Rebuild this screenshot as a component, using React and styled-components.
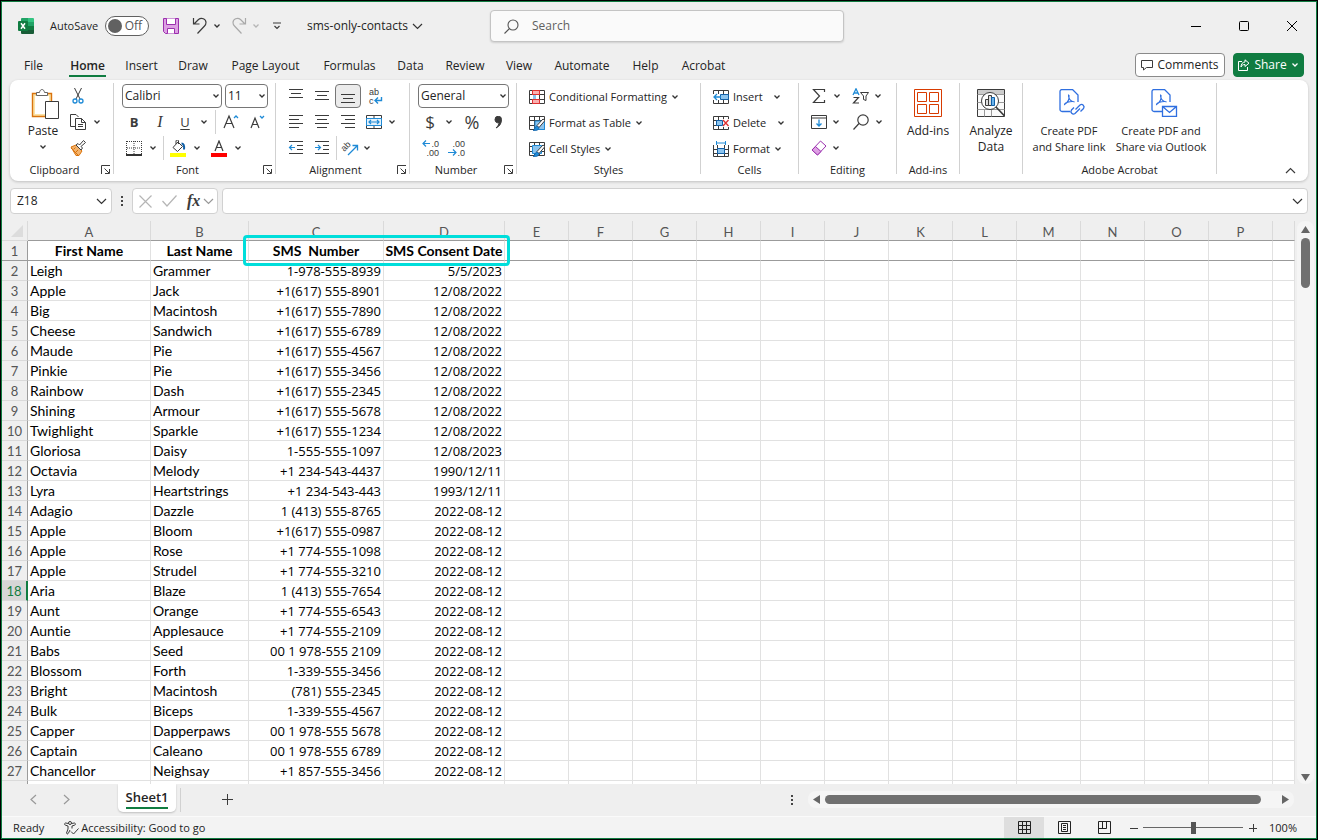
import React from "react";
import styled, { createGlobalStyle, css } from "styled-components";

const GREEN = "#107c41";
const INK = "#242424";
const BLUE = "#1e8ad6";

const GlobalStyle = createGlobalStyle`
  *, *::before, *::after { box-sizing: border-box; }
  body { margin: 0; background: #000; }
  button, input, select { font: inherit; color: inherit; }
`;

/* ---------- window frame ---------- */

const Window = styled.div`
  display: flex;
  flex-direction: column;
  height: 100vh;
  border: 1px solid #000;
  outline: 1px solid ${GREEN};
  outline-offset: -2px;
  padding: 1px;
  background: #efefef;
  color: ${INK};
  font: 12px/16px "Open Sans", "Noto Sans", sans-serif;
  overflow: hidden;
`;

const PlainButton = styled.button`
  display: flex;
  align-items: center;
  justify-content: center;
  padding: 0;
  border: 0;
  background: none;
  white-space: nowrap;
  cursor: default;
`;

const Drawing = styled.svg`
  display: block;
  flex: none;
  fill: none;
  stroke: ${(p) => p.$c || "#3b3b3b"};
  stroke-width: ${(p) => p.$sw || 1};
  text {
    stroke: none;
    fill: #3b3b3b;
    font: 9px "Liberation Sans", sans-serif;
  }
`;

const Icon = ({ w = 16, h = 16, c, sw, children }) => (
  <Drawing width={w} height={h} viewBox={`0 0 ${w} ${h}`} $c={c} $sw={sw} aria-hidden="true">
    {children}
  </Drawing>
);

const Chevron = ({ c = "#333" }) => (
  <Icon w={8} h={6} c={c} sw={1.3}><path d="M1.5 1.5 4 4l2.5-2.5" /></Icon>
);
const WideChevron = ({ c = "#333" }) => (
  <Icon w={11} h={7} c={c} sw={1.2}><path d="M1 1l4.500 4.500L10 1" /></Icon>
);
const Dots = () => (
  <Icon w={4} h={12}><path d="M1 1h2v2H1zM1 5h2v2H1zM1 9h2v2H1z" fill="#444" stroke="none" /></Icon>
);

/* ---------- title bar ---------- */

const TitleBar = styled.header`
  display: flex;
  align-items: center;
  flex: none;
  height: 48px;
`;
const QuickAccess = styled.div`
  display: flex;
  align-items: center;
  gap: 5px;
  flex: 0 0 488px;
  padding-left: 16px;
`;
const SplitButton = styled.div`
  display: flex;
`;
const AutoSave = styled.label`
  display: flex;
  align-items: center;
  gap: 7px;
  width: 115px;
  padding-left: 11px;
  font-size: 11px;
`;
const Toggle = styled.span`
  position: relative;
  display: flex;
  align-items: center;
  justify-content: flex-end;
  flex: none;
  width: 44px;
  height: 20px;
  padding-right: 6px;
  border: 1px solid #616161;
  border-radius: 10px;
  background: #fff;
  color: #555;
  font-size: 12px;
`;
const ToggleInput = styled.input`
  appearance: none;
  position: absolute;
  inset: 0;
  margin: 0;
  &::before {
    content: "";
    position: absolute;
    left: 2px;
    top: 2px;
    width: 14px;
    height: 14px;
    border-radius: 50%;
    background: #616161;
  }
`;
const QuickButton = styled(PlainButton)`
  width: ${(p) => p.$w}px;
  height: 24px;
`;
const DocumentTitle = styled(PlainButton)`
  gap: 4px;
  height: 24px;
  padding-left: 14px;
`;
const SearchBox = styled.label`
  display: flex;
  align-items: center;
  gap: 13px;
  flex: 0 1 354px;
  height: 32px;
  padding-left: 13px;
  border: 1px solid #c4c4c4;
  border-radius: 4px;
  background: #fafafa;
  box-shadow: 0 1px 2px #0002;
`;
const SearchInput = styled.input`
  flex: 1;
  min-width: 0;
  border: 0;
  padding: 0;
  outline: 0;
  background: none;
  font-size: 12px;
  &::placeholder { color: #616161; opacity: 1; }
`;
const WindowControls = styled.div`
  display: flex;
  margin-left: auto;
`;
const WindowButton = styled(PlainButton)`
  width: 48px;
  height: 48px;
`;

const ExcelLogo = () => (
  <Icon w={16} h={16}>
    <g stroke="none">
      <path d="M3 1a1 1 0 0 1 1-1h6v4H3z" fill="#21a366" />
      <path d="M10 0h5a1 1 0 0 1 1 1v3h-6z" fill="#33c481" />
      <path d="M3 4h7v4H3z" fill="#107c41" />
      <path d="M10 4h6v4h-6z" fill="#21a366" />
      <path d="M3 8h7v4H3z" fill="#185c37" />
      <path d="M10 8h6v4h-6z" fill="#107c41" />
      <path d="M3 12h13v3a1 1 0 0 1-1 1H4a1 1 0 0 1-1-1z" fill="#185c37" />
      <rect x="0" y="3" width="10" height="10" rx="1" fill="#107c41" />
    </g>
    <path d="M3 5.2l4 5.6M7 5.2l-4 5.6" stroke="#fff" strokeWidth="1.5" />
  </Icon>
);

const TopBar = () => (
  <TitleBar>
    <QuickAccess>
      <ExcelLogo />
      <AutoSave>
        AutoSave
        <Toggle><ToggleInput type="checkbox" role="switch" />Off</Toggle>
      </AutoSave>
      <QuickButton $w={24} aria-label="Save">
        <Icon c="#9b2fae">
          <path d="M.5 .5h15v15h-13l-2-2z" fill="#dda0e3" />
          <path d="M3.500 .5v6h9v-6M4.500 15.500v-5h7v5" fill="#fff" />
        </Icon>
      </QuickButton>
      <SplitButton>
        <QuickButton $w={24} aria-label="Undo">
          <Icon w={16} h={18} sw={1.2}><path d="M1.500 1v6h6M2 7l4.500-4.500c3-2.500 7.500-.5 7.500 3 0 1.500-.5 2.500-1.500 3.500l-7 7.500" /></Icon>
        </QuickButton>
        <QuickButton $w={10} aria-label="Undo history"><Chevron /></QuickButton>
      </SplitButton>
      <SplitButton>
        <QuickButton $w={24} aria-label="Redo">
          <Icon w={16} h={18} sw={1.2} c="#a9a9a9"><path d="M14.500 1v6h-6M14 7 9.500 2.500c-3-2.500-7.500-.5-7.500 3 0 1.500.5 2.500 1.500 3.500l7 7.500" /></Icon>
        </QuickButton>
        <QuickButton $w={10} aria-label="Redo history"><Chevron c="#b5b5b5" /></QuickButton>
      </SplitButton>
      <QuickButton $w={22} aria-label="Customize toolbar">
        <Icon w={8} h={8} sw={1.2}><path d="M0 1h8M1.500 4 4 6.500 6.500 4" /></Icon>
      </QuickButton>
      <DocumentTitle>sms-only-contacts<WideChevron /></DocumentTitle>
    </QuickAccess>
    <SearchBox>
      <Icon w={15} h={15} c="#555" sw={1.1}><circle cx="9" cy="6" r="5" /><path d="M5.500 9.500l-5 5" /></Icon>
      <SearchInput type="search" placeholder="Search" aria-label="Search" />
    </SearchBox>
    <WindowControls>
      <WindowButton aria-label="Minimize"><Icon w={10} h={10} c="#000"><path d="M0 5.500h10" /></Icon></WindowButton>
      <WindowButton aria-label="Maximize"><Icon w={10} h={10} c="#000"><rect x=".5" y=".5" width="9" height="9" rx="1" /></Icon></WindowButton>
      <WindowButton aria-label="Close"><Icon w={10} h={10} c="#000"><path d="M0 0l10 10M10 0 0 10" /></Icon></WindowButton>
    </WindowControls>
  </TitleBar>
);

/* ---------- ribbon tabs ---------- */

const TabBar = styled.nav`
  display: flex;
  align-items: center;
  flex: none;
  height: 30px;
  padding: 0 12px 0 6px;
`;
const TabButton = styled(PlainButton)`
  width: ${(p) => p.$w}px;
  height: 30px;
  font-size: 12px;
  font-weight: ${(p) => (p.$active ? 600 : 400)};
`;
const TabText = styled.span`
  display: block;
  padding: 0 1px;
  border-bottom: 2px solid ${(p) => (p.$active ? GREEN : "transparent")};
  margin-top: 4px;
  line-height: 18px;
`;
const TabActions = styled.div`
  display: flex;
  gap: 8px;
  margin-left: auto;
`;
const ActionButton = styled(PlainButton)`
  gap: 4px;
  width: ${(p) => p.$w}px;
  height: 24px;
  border: 1px solid ${(p) => (p.$primary ? GREEN : "#8a8a8a")};
  border-radius: 4px;
  background: ${(p) => (p.$primary ? GREEN : "#fff")};
  color: ${(p) => (p.$primary ? "#fff" : INK)};
  font-size: 12px;
`;

const TABS = [
  ["File", 51], ["Home", 57], ["Insert", 51], ["Draw", 52], ["Page Layout", 93], ["Formulas", 75],
  ["Data", 47], ["Review", 62], ["View", 46], ["Automate", 80], ["Help", 47], ["Acrobat", 69],
];

const Tabs = () => (
  <TabBar>
    {TABS.map(([name, w]) => (
      <TabButton key={name} $w={w} $active={name === "Home"}>
        <TabText $active={name === "Home"}>{name}</TabText>
      </TabButton>
    ))}
    <TabActions>
      <ActionButton $w={90}>
        <Icon w={12} h={12}><path d="M.5 1.500h11v7h-6l-3 2.500v-2.500h-2z" /></Icon>
        Comments
      </ActionButton>
      <ActionButton $w={71} $primary>
        <Icon w={12} h={12} c="#fff"><path d="M4 2.500H.5v9h9V8M7 .8l4 3.400-4 3.300V5.500c-2 0-3.300.8-4 2.500 0-3 1.500-4.800 4-5z" /></Icon>
        Share
        <Chevron c="#fff" />
      </ActionButton>
    </TabActions>
  </TabBar>
);

/* ---------- ribbon ---------- */

const Ribbon = styled.section`
  display: flex;
  flex: none;
  height: 101px;
  margin: 0 8px;
  padding: 3px 0 0;
  border-radius: 8px;
  background: #fff;
  box-shadow: 0 1px 3px #0003;
`;
const Group = styled.div`
  display: flex;
  flex-direction: column;
  flex: 0 0 ${(p) => p.$w}px;
  padding-left: ${(p) => p.$pad || 0}px;
  border-right: 1px solid #d1d1d1;
  height: 91px;
`;
const GroupFooter = styled.div`
  display: flex;
  align-items: center;
  gap: 4px;
  flex: none;
  height: 18px;
  margin-left: -${(p) => p.$pad || 0}px;
  padding: 0 2px;
  font-size: 11px;
`;
const GroupLabel = styled.span`
  flex: 1;
  text-align: center;
`;
const GroupBody = styled.div`
  display: flex;
  flex: none;
  height: 78px;
`;
const Rows = styled.div`
  display: flex;
  flex-direction: column;
`;
const ToolRow = styled.div`
  display: flex;
  align-items: center;
  gap: ${(p) => p.$gap || 0}px;
  height: 26px;
  padding-left: ${(p) => p.$pad || 0}px;
`;
const Tool = styled(PlainButton)`
  width: ${(p) => p.$w}px;
  height: 24px;
  ${(p) => p.$pressed && css`
    border: 1px solid #767676;
    border-radius: 4px;
    background: #ebebeb;
  `}
`;
const Divider = styled.i`
  width: ${(p) => p.$w}px;
  height: 24px;
  background: linear-gradient(#d1d1d1, #d1d1d1) center / 1px 100% no-repeat;
`;
const ToolGap = styled.span`
  width: 8px;
`;
const Letter = styled.span`
  font-size: ${(p) => p.$size || 14}px;
  font-weight: ${(p) => (p.$bold ? 700 : 400)};
  font-style: ${(p) => (p.$italic ? "italic" : "normal")};
  font-family: ${(p) => (p.$serif ? '"Liberation Serif", serif' : "inherit")};
  text-decoration: ${(p) => (p.$underline ? "underline" : "none")};
  text-underline-offset: 2px;
  color: #3b3b3b;
`;
const TextTool = styled(PlainButton)`
  justify-content: flex-start;
  gap: 4px;
  height: 24px;
  padding-top: 1px;
  font-size: 11px;
`;
const TextToolLabel = styled.span`
  min-width: ${(p) => p.$w || 0}px;
  text-align: left;
`;
const BigTool = styled(PlainButton)`
  flex-direction: column;
  justify-content: flex-start;
  width: ${(p) => p.$w}px;
  padding-top: 5px;
  font-size: ${(p) => (p.$small ? 11 : 12)}px;
  line-height: 16px;
`;
const BigIcon = styled.span`
  display: flex;
  align-items: flex-start;
  height: 35px;
  padding-top: 1px;
`;
const BigMore = styled.span`
  display: flex;
  align-items: center;
  height: 16px;
`;
const Picker = styled.span`
  position: relative;
  display: block;
  width: ${(p) => p.$w}px;
  height: 24px;
  svg { position: absolute; right: 2px; top: 9px; pointer-events: none; }
`;
const PickerSelect = styled.select`
  appearance: none;
  width: 100%;
  height: 24px;
  padding: 0 2px;
  border: 1px solid #767676;
  border-radius: 4px;
  background: #fff;
  font-size: 12px;
`;

const Select = ({ w, label, value }) => (
  <Picker $w={w}>
    <PickerSelect aria-label={label} defaultValue={value}><option>{value}</option></PickerSelect>
    <Chevron />
  </Picker>
);
const More = ({ w = 12, label = "More options" }) => (
  <Tool $w={w} aria-label={label}><Chevron /></Tool>
);
const Launcher = () => (
  <PlainButton aria-label="Open settings">
    <Icon w={10} h={10}><path d="M.5 9V.5H9M3.500 3.500l4.500 4.500M8.500 4v4.500H4" /></Icon>
  </PlainButton>
);

const RibbonGroup = ({ w, pad = 0, label, launcher, children }) => (
  <Group $w={w} $pad={pad}>
    <GroupBody>{children}</GroupBody>
    <GroupFooter $pad={pad}>
      <GroupLabel>{label}</GroupLabel>
      {launcher && <Launcher />}
    </GroupFooter>
  </Group>
);

const Lines = ({ rows }) => (
  <Icon><path d={rows.map(([x, y, len]) => `M${x} ${y}.5h${len}`).join("")} /></Icon>
);
const Indent = ({ out }) => (
  <Icon>
    <path d="M1 1.500h14M9 5.500h6M9 9.500h6M1 13.500h14" />
    <path d={out ? "M7 7.500H1.500M4 5 1.500 7.500 4 10" : "M1 7.500h5.500M4 5l2.500 2.500L4 10"} stroke={BLUE} strokeWidth="1.2" />
  </Icon>
);

const CellGrid = () => <path d="M.5 1.500h15v13H.5zM.5 5.500h15M.5 10.500h15M5.500 1.500v13M10.500 1.500v13" />;
const Brush = () => (
  <g>
    <path d="M8 10.500l6-6.500 2 1.500-6 7z" fill="#fff" />
    <path d="M4 15.500c2-.5 1.500-4 4-4.500l2 2c0 2-3 3-6 2.500z" fill={BLUE} stroke="#1160a8" strokeWidth=".7" />
  </g>
);

const Clipboard = () => (
  <RibbonGroup w={104} pad={8} label="Clipboard" launcher>
    <BigTool $w={50}>
      <BigIcon>
        <Icon w={32} h={32}>
          <g transform="translate(4 0)">
            <path d="M1.500 4.500h19v23h-19z" fill="#fbe2a5" stroke="#d9730d" strokeWidth="1.400" />
            <path d="M4 7h14v18H4z" fill="#fff" stroke="none" />
            <path d="M5.500 6.500v-3h3c.5-4 4.500-4 5 0h3v3z" fill="#fff" stroke="#666" />
            <path d="M14.500 12.500h13v17h-13z" fill="#fff" />
          </g>
        </Icon>
      </BigIcon>
      Paste
      <BigMore><Chevron /></BigMore>
    </BigTool>
    <Rows>
      <ToolRow>
        <Tool $w={20} aria-label="Cut">
          <Icon><path d="M4.500 0 10 11M11.500 0 6 11" /><circle cx="5" cy="13" r="2" stroke={BLUE} strokeWidth="1.3" /><circle cx="11" cy="13" r="2" stroke={BLUE} strokeWidth="1.3" /></Icon>
        </Tool>
      </ToolRow>
      <ToolRow>
        <Tool $w={20} aria-label="Copy">
          <Icon><path d="M5 12.500H.5V.5H6l2.500 2.500M5.500 4.500h6l4 4v7h-10zM11.500 4.500v4h4M8 10.500h5M8 12.500h5" /></Icon>
        </Tool>
        <More w={18} />
      </ToolRow>
      <ToolRow>
        <Tool $w={20} aria-label="Format Painter">
          <Icon><path d="M1 7l5-2 6 6-3 4.500H6z" fill="#f3b26b" stroke="#d9730d" /><path d="M1 8l7 7M3.500 9.500l2-2M6 12l2-2" stroke="#d9730d" /><path d="M6 5l2-1.500L9.500 5l4-4.500 2 2L11 6.500 12.500 8 11 10z" fill="#fff" /></Icon>
        </Tool>
      </ToolRow>
    </Rows>
  </RibbonGroup>
);

const FontGroup = () => (
  <RibbonGroup w={162} pad={7} label="Font" launcher>
    <Rows>
      <ToolRow $gap={3} $pad={1}>
        <Select w={100} label="Font" value="Calibri" />
        <Select w={43} label="Font size" value="11" />
      </ToolRow>
      <ToolRow>
        <Tool $w={26} aria-label="Bold"><Letter $bold $size={13}>B</Letter></Tool>
        <Tool $w={26} aria-label="Italic"><Letter $italic $serif $size={16}>I</Letter></Tool>
        <Tool $w={24} aria-label="Underline"><Letter $underline $size={13}>U</Letter></Tool>
        <More w={14} />
        <Divider $w={8} />
        <Tool $w={24} aria-label="Increase font size">
          <Icon><path d="M1 14 6 2l5 12M3 9.500h6" strokeWidth="1.200" /><path d="M11 4l2-2 2 2" stroke={BLUE} strokeWidth="1.3" /></Icon>
        </Tool>
        <Tool $w={28} aria-label="Decrease font size">
          <Icon><path d="M2 14 6 4l4 10M3.500 10.500h5" strokeWidth="1.200" /><path d="M11 2l2 2 2-2" stroke={BLUE} strokeWidth="1.3" /></Icon>
        </Tool>
      </ToolRow>
      <ToolRow>
        <Tool $w={26} aria-label="Borders">
          <Icon><path d="M.5 1v13M15.500 1v13M8 1v13M1 1.500h14M1 8h14" strokeDasharray="1 1" /><path d="M0 15h16" strokeWidth="1.6" stroke="#000" /></Icon>
        </Tool>
        <More />
        <Divider $w={9} />
        <Tool $w={20} aria-label="Fill color">
          <Icon w={16} h={17}><path d="M3 7.500 8 2l4.500 4.500-5 5z" /><path d="M6 4V1c0-1.500 2.500-1.500 2.500 0v3" /><path d="M11.500 3.500c2 0 3 2 2.500 6" stroke="#1160a8" strokeWidth="2" /><path d="M0 13h16v4H0z" fill="#ff0" stroke="none" /></Icon>
        </Tool>
        <More w={18} />
        <Tool $w={26} aria-label="Font color">
          <Icon w={16} h={17}><path d="M4 11 8 1l4 10M5.500 7.500h5" strokeWidth="1.2" /><path d="M0 13h16v4H0z" fill="#f00" stroke="none" /></Icon>
        </Tool>
        <More />
      </ToolRow>
    </Rows>
  </RibbonGroup>
);

const Alignment = () => (
  <RibbonGroup w={134} pad={7} label="Alignment" launcher>
    <Rows>
      <ToolRow>
        <Tool $w={26} aria-label="Top align"><Lines rows={[[1, 1, 14], [3, 5, 10], [1, 9, 14]]} /></Tool>
        <Tool $w={26} aria-label="Middle align"><Lines rows={[[1, 3, 14], [3, 7, 10], [1, 11, 14]]} /></Tool>
        <Tool $w={26} $pressed aria-label="Bottom align"><Lines rows={[[1, 6, 14], [3, 10, 10], [1, 14, 14]]} /></Tool>
        <Tool $w={28} aria-label="Wrap text">
          <Icon w={16} h={22}><text x="2" y="10">ab</text><text x="2" y="19">c</text><path d="M14.500 12v3.500H8.500M11 12.500l-3 3 3 3" stroke={BLUE} strokeWidth="1.4" /></Icon>
        </Tool>
      </ToolRow>
      <ToolRow>
        <Tool $w={26} aria-label="Align left"><Lines rows={[[1, 1, 14], [1, 5, 10], [1, 9, 14], [1, 13, 10]]} /></Tool>
        <Tool $w={26} aria-label="Center"><Lines rows={[[1, 1, 14], [3, 5, 10], [1, 9, 14], [3, 13, 10]]} /></Tool>
        <Tool $w={26} aria-label="Align right"><Lines rows={[[1, 1, 14], [5, 5, 10], [1, 9, 14], [5, 13, 10]]} /></Tool>
        <Tool $w={26} aria-label="Merge and center">
          <Icon><path d="M.5 1.500h15v13H.5zM8 1.500v3M8 11.500v3" /><path d="M.5 4.500h15v7H.5z" fill="#e3f1fb" stroke={BLUE} /><path d="M3 8h10M5 6 3 8l2 2M11 6l2 2-2 2" stroke={BLUE} strokeWidth="1.2" /></Icon>
        </Tool>
        <More w={10} />
      </ToolRow>
      <ToolRow>
        <Tool $w={26} aria-label="Decrease indent"><Indent out /></Tool>
        <Tool $w={26} aria-label="Increase indent"><Indent /></Tool>
        <Divider $w={3} />
        <Tool $w={24} aria-label="Orientation">
          <Icon w={20} h={20}><text x="3" y="13" transform="rotate(-45 5 12)">ab</text><path d="M8 17l9-9M12.500 7.500h5v5" stroke={BLUE} strokeWidth="1.300" /></Icon>
        </Tool>
        <More w={10} />
      </ToolRow>
    </Rows>
  </RibbonGroup>
);

const DecimalIcon = ({ decrease }) => (
  <Icon w={18} h={22}>
    <text x="17" y="10" textAnchor="end">{decrease ? ".00" : ".0"}</text>
    <text x="17" y="19" textAnchor="end">{decrease ? ".0" : ".00"}</text>
    <path
      d={decrease ? "M0 15.500h8M5 12.500l3 3-3 3" : "M8 6.500H1M4 3.500l-3 3 3 3"}
      stroke={BLUE}
      strokeWidth="1.200"
    />
  </Icon>
);

const NumberGroup = () => (
  <RibbonGroup w={107} pad={8} label="Number" launcher>
    <Rows>
      <ToolRow><Select w={91} label="Number format" value="General" /></ToolRow>
      <ToolRow>
        <Tool $w={24} aria-label="Currency"><Letter $size={17}>$</Letter></Tool>
        <More w={14} />
        <Tool $w={32} aria-label="Percent"><Letter $size={18}>%</Letter></Tool>
        <Tool $w={20} aria-label="Comma style">
          <Icon w={9} h={13}><path d="M1 3.500a3 3 0 0 1 6.500 0c0 4-2 7-5.500 8.500 2-2 3-3.500 3-5.500C3 7.500 1 6 1 3.500z" fill="#3b3b3b" /></Icon>
        </Tool>
      </ToolRow>
      <ToolRow>
        <Tool $w={26} aria-label="Increase decimal"><DecimalIcon /></Tool>
        <Tool $w={26} aria-label="Decrease decimal"><DecimalIcon decrease /></Tool>
      </ToolRow>
    </Rows>
  </RibbonGroup>
);

const Styles = () => (
  <RibbonGroup w={184} pad={12} label="Styles">
    <Rows>
      <ToolRow>
        <TextTool>
          <Icon><CellGrid /><path d="M3.500 1.500h7v4h-7zM3.500 10.500h7v4h-7z" fill="#f9b0b0" stroke="#e03030" /><path d="M4 6h3v4H4z" fill="#8cc4ee" stroke="none" /></Icon>
          Conditional Formatting<Chevron />
        </TextTool>
      </ToolRow>
      <ToolRow>
        <TextTool>
          <Icon><CellGrid /><path d="M6 6h9.500v8.500H6z" fill="#8cc4ee" stroke={BLUE} /><Brush /></Icon>
          Format as Table<Chevron />
        </TextTool>
      </ToolRow>
      <ToolRow>
        <TextTool>
          <Icon><CellGrid /><path d="M3.500 4.500h9v8h-9z" fill="#8cc4ee" stroke={BLUE} /><Brush /></Icon>
          Cell Styles<Chevron />
        </TextTool>
      </ToolRow>
    </Rows>
  </RibbonGroup>
);

const Cells = () => (
  <RibbonGroup w={98} pad={12} label="Cells">
    <Rows>
      <ToolRow>
        <TextTool>
          <Icon><CellGrid /><path d="M0 5h9v6H0z" fill="#fff" stroke="none" /><path d="M7.500 5.500h8v5h-8z" fill="#8cc4ee" stroke="#1160a8" /><path d="M8 8H1M4 5 1 8l3 3" stroke={BLUE} strokeWidth="1.300" /></Icon>
          <TextToolLabel $w={36}>Insert</TextToolLabel><Chevron />
        </TextTool>
      </ToolRow>
      <ToolRow>
        <TextTool>
          <Icon><CellGrid /><path d="M8 4h8v8H8z" fill="#fff" stroke="none" /><path d="M3.500 5.500h6v5h-6z" fill="#8cc4ee" stroke="#1160a8" /><path d="M10 5l5.500 6M15.500 5 10 11" stroke="#e03030" strokeWidth="1.3" /></Icon>
          <TextToolLabel $w={40}>Delete</TextToolLabel><Chevron />
        </TextTool>
      </ToolRow>
      <ToolRow>
        <TextTool>
          <Icon><path d="M.5 4v11.500h15V4M.5 8.500h15M.5 12.500h15M4.500 4v11.500M11.500 4v11.500" /><path d="M4.500 7.500h7v5h-7z" fill="#8cc4ee" stroke="#1160a8" /><path d="M3.500 0v4M12.500 0v4M3.500 2h9" stroke={BLUE} /></Icon>
          <TextToolLabel $w={36}>Format</TextToolLabel><Chevron />
        </TextTool>
      </ToolRow>
    </Rows>
  </RibbonGroup>
);

const Editing = () => (
  <RibbonGroup w={98} pad={7} label="Editing">
    <Rows>
      <ToolRow>
        <Tool $w={26} aria-label="AutoSum"><Icon sw={1.2}><path d="M13.500 4V1.500h-11L8.500 8l-6 6.500h11V12" /></Icon></Tool>
        <More w={10} />
        <ToolGap />
        <Tool $w={22} aria-label="Sort and filter">
          <Icon w={18} h={16}><path d="M1 7 4 .8 7 7M2 5h4" stroke={BLUE} strokeWidth="1.3" /><path d="M1.500 9.500h5L1.500 15h5.500" strokeWidth="1.2" /><path d="M8.500 4.500h8L14 8v4.500l-2.500-1V8z" /></Icon>
        </Tool>
        <More w={12} />
      </ToolRow>
      <ToolRow>
        <Tool $w={26} aria-label="Fill"><Icon><path d="M.5 1.500h15v13H.5zM.5 4h15" /><path d="M8 5.500V12M5.500 9.500 8 12l2.500-2.500" stroke={BLUE} strokeWidth="1.3" /></Icon></Tool>
        <More w={8} />
        <ToolGap />
        <Tool $w={26} aria-label="Find and select"><Icon sw={1.2}><circle cx="10" cy="6" r="5.200" /><path d="M6 9.500.5 15.500" /></Icon></Tool>
        <More w={10} />
      </ToolRow>
      <ToolRow>
        <Tool $w={26} aria-label="Clear"><Icon c="#9b2fae"><path d="M1 10 9.500 1l5.500 5-8.500 9z" fill="#fff" /><path d="M1 10l3.500-3.500 5.500 5L6.500 15z" fill="#dda0e3" /></Icon></Tool>
        <More w={8} />
      </ToolRow>
    </Rows>
  </RibbonGroup>
);

const PdfPage = ({ children }) => (
  <Icon w={36} h={28} c="#2f6fe0" sw={1.3}>
    <g transform="translate(7 0)">
      <path d="M12 22.500H4a2 2 0 0 1-2-2V2.500a2 2 0 0 1 2-2h10.500L20 6v7" />
      <path d="M10.500 5.500c-.5 4 2 7 6 7.500M11 6c.5 4-1 7.500-4.500 9.500 0-1.500 5-3.500 10-2.800" strokeWidth="1.100" />
      {children}
    </g>
  </Icon>
);

const CollapseButton = styled(PlainButton)`
  align-self: flex-end;
  width: 20px;
  height: 22px;
  margin: 0 8px 0 auto;
`;

const RibbonBar = () => (
  <Ribbon>
    <Clipboard />
    <FontGroup />
    <Alignment />
    <NumberGroup />
    <Styles />
    <Cells />
    <Editing />
    <RibbonGroup w={63} label="Add-ins">
      <BigTool $w={62}>
        <BigIcon>
          <Icon w={28} h={28} c="#d83b01"><path d="M.5 .5h27v27H.5zM3.500 3.500h9v9h-9zM15.500 3.500h9v9h-9zM3.500 15.500h9v9h-9zM15.500 15.500h9v9h-9z" /></Icon>
        </BigIcon>
        Add-ins
      </BigTool>
    </RibbonGroup>
    <RibbonGroup w={62} label="">
      <BigTool $w={62}>
        <BigIcon>
          <Icon w={28} h={28}>
            <path d="M.5 .5h27v27H.5z" fill="#fafafa" />
            <path d="M1 1h26v4H1z" fill="#ccc" stroke="none" />
            <path d="M.5 5.500h27M.5 13.500h27M.5 20.500h27M7.500 20.500v7M14.500 20.500v7" stroke="#999" />
            <circle cx="13" cy="12" r="8.500" fill="#fff" />
            <path d="M8.500 10.500h3v6h-3zM11.500 6.500h3v10h-3z" fill="#ddd" />
            <path d="M14.500 8.500h3v8h-3z" fill="#6bb3ea" stroke="#1160a8" />
            <path d="M19 18l8.500 9" strokeWidth="1.6" />
          </Icon>
        </BigIcon>
        <span>Analyze</span>
        <span>Data</span>
      </BigTool>
    </RibbonGroup>
    <RibbonGroup w={194} label="Adobe Acrobat">
      <BigTool $w={92} $small>
        <BigIcon>
          <PdfPage><path d="M17.500 20.500l4.500-4.500a2.500 2.500 0 0 1 3.500 3.500l-3 3M22 19.500l-5 5a2.500 2.500 0 0 1-3.500-3.500l2.500-2.500" /></PdfPage>
        </BigIcon>
        <span>Create PDF</span>
        <span>and Share link</span>
      </BigTool>
      <BigTool $w={92} $small>
        <BigIcon>
          <PdfPage><path d="M12.500 17.500h14v10h-14zM12.500 17.500l7 6 7-6" fill="#fff" /></PdfPage>
        </BigIcon>
        <span>Create PDF and</span>
        <span>Share via Outlook</span>
      </BigTool>
    </RibbonGroup>
    <CollapseButton aria-label="Collapse ribbon">
      <Icon w={11} h={7} sw={1.2}><path d="M1 6l4.500-4.500L10 6" /></Icon>
    </CollapseButton>
  </Ribbon>
);

/* ---------- formula bar ---------- */

const FormulaBar = styled.div`
  display: flex;
  align-items: center;
  flex: none;
  height: 40px;
  padding: 0 8px;
`;
const FormulaBox = styled.div`
  display: flex;
  align-items: center;
  flex: ${(p) => (p.$w ? `0 0 ${p.$w}px` : "1")};
  gap: ${(p) => p.$gap || 0}px;
  min-width: 0;
  height: 26px;
  padding: 0 ${(p) => p.$right || 4}px 0 6px;
  border: 1px solid #d1d1d1;
  border-radius: 4px;
  background: #fff;
`;
const FormulaInput = styled.input`
  flex: 1;
  width: 0;
  min-width: 0;
  padding: 0;
  border: 0;
  outline: 0;
  background: none;
  font-size: 12px;
`;
const BarGap = styled.span`
  display: flex;
  flex: none;
  justify-content: center;
  width: ${(p) => p.$w}px;
`;
const FunctionButton = styled(PlainButton)`
  gap: 3px;
`;

const Formula = () => (
  <FormulaBar>
    <FormulaBox $w={102}>
      <FormulaInput aria-label="Name box" defaultValue="Z18" />
      <PlainButton aria-label="Choose name"><WideChevron /></PlainButton>
    </FormulaBox>
    <BarGap $w={20}><Dots /></BarGap>
    <FormulaBox $w={86} $gap={10} $right={1}>
      <PlainButton aria-label="Cancel"><Icon w={13} h={13} c="#b5b5b5" sw={1.2}><path d="M.5 .5l12 12M12.500 .5l-12 12" /></Icon></PlainButton>
      <PlainButton aria-label="Enter"><Icon w={15} h={12} c="#b5b5b5" sw={1.2}><path d="M.5 6l4.500 5L14.500 .5" /></Icon></PlainButton>
      <FunctionButton aria-label="Insert function"><Letter $bold $italic $serif $size={16}>fx</Letter><WideChevron c="#999" /></FunctionButton>
    </FormulaBox>
    <BarGap $w={4} />
    <FormulaBox>
      <FormulaInput aria-label="Formula" />
      <PlainButton aria-label="Expand formula bar"><WideChevron /></PlainButton>
    </FormulaBox>
  </FormulaBar>
);

/* ---------- sheet ---------- */

const SheetArea = styled.main`
  display: flex;
  flex: 1;
  min-height: 0;
  gap: 2px;
`;
const GridView = styled.div`
  position: relative;
  flex: 1;
  min-width: 0;
  overflow: hidden;
`;
const Grid = styled.table`
  width: 100%;
  table-layout: fixed;
  border-collapse: separate;
  border-spacing: 0;
  background: #fff;
  font: 13px/18px Lato, "Liberation Sans", sans-serif;
  font-variant-ligatures: none;
  color: #000;
`;
const ColHead = styled.th`
  height: 20px;
  padding: 3px 0 0;
  border-right: 1px solid #dadada;
  border-bottom: 1px solid #9b9b9b;
  background: #efefef;
  color: #555;
  font-weight: 400;
  line-height: 16px;
`;
const Corner = styled.td`
  height: 20px;
  padding: 0 4px 0 0;
  border-bottom: 1px solid #dadada;
  border-right: 1px solid #dadada;
  background: #efefef;
  svg { margin-left: auto; }
`;
const RowHead = styled.th`
  height: 20px;
  padding: 0;
  border-right: ${(p) => (p.$selected ? `2px solid ${GREEN}` : "1px solid #9b9b9b")};
  border-bottom: 1px solid ${(p) => (p.$first ? "#9b9b9b" : "#dadada")};
  background: ${(p) => (p.$selected ? "#d6d6d6" : "#efefef")};
  color: ${(p) => (p.$selected ? GREEN : "#555")};
  font-weight: 400;
  line-height: 18px;
`;
const Cell = styled.td`
  height: 20px;
  padding: 1px 2px 0;
  border-right: 1px solid #e1e1e1;
  border-bottom: 1px solid #e1e1e1;
  overflow: hidden;
  white-space: pre;
  font-size: 14px;
  line-height: 18px;
`;
const TitleCell = styled(Cell)`
  padding: 1px 0 0;
  border-bottom-color: #9b9b9b;
  font-weight: 700;
  text-align: center;
`;
const NumberCell = styled(Cell)`
  font-family: "Open Sans", sans-serif;
  font-size: 13px;
  text-align: right;
`;
const Highlight = styled.div`
  position: absolute;
  left: 241px;
  top: 14px;
  width: 267px;
  height: 31px;
  border: 3px solid #00dedb;
  border-radius: 4px;
  pointer-events: none;
`;

const COLUMN_WIDTHS = [123, 98, 135, 121, ...Array(12).fill(64)];
const LETTERS = "ABCDEFGHIJKLMNOP".split("");
const ROWS = [
  ["First Name", "Last Name", "SMS  Number", "SMS Consent Date"],
  ["Leigh", "Grammer", "1-978-555-8939", "5/5/2023"],
  ["Apple", "Jack", "+1(617) 555-8901", "12/08/2022"],
  ["Big", "Macintosh", "+1(617) 555-7890", "12/08/2022"],
  ["Cheese", "Sandwich", "+1(617) 555-6789", "12/08/2022"],
  ["Maude", "Pie", "+1(617) 555-4567", "12/08/2022"],
  ["Pinkie", "Pie", "+1(617) 555-3456", "12/08/2022"],
  ["Rainbow", "Dash", "+1(617) 555-2345", "12/08/2022"],
  ["Shining", "Armour", "+1(617) 555-5678", "12/08/2022"],
  ["Twighlight", "Sparkle", "+1(617) 555-1234", "12/08/2022"],
  ["Gloriosa", "Daisy", "1-555-555-1097", "12/08/2023"],
  ["Octavia", "Melody", "+1 234-543-4437", "1990/12/11"],
  ["Lyra", "Heartstrings", "+1 234-543-443", "1993/12/11"],
  ["Adagio", "Dazzle", "1 (413) 555-8765", "2022-08-12"],
  ["Apple", "Bloom", "+1(617) 555-0987", "2022-08-12"],
  ["Apple", "Rose", "+1 774-555-1098", "2022-08-12"],
  ["Apple", "Strudel", "+1 774-555-3210", "2022-08-12"],
  ["Aria", "Blaze", "1 (413) 555-7654", "2022-08-12"],
  ["Aunt", "Orange", "+1 774-555-6543", "2022-08-12"],
  ["Auntie", "Applesauce", "+1 774-555-2109", "2022-08-12"],
  ["Babs", "Seed", "00 1 978-555 2109", "2022-08-12"],
  ["Blossom", "Forth", "1-339-555-3456", "2022-08-12"],
  ["Bright", "Macintosh", "(781) 555-2345", "2022-08-12"],
  ["Bulk", "Biceps", "1-339-555-4567", "2022-08-12"],
  ["Capper", "Dapperpaws", "00 1 978-555 5678", "2022-08-12"],
  ["Captain", "Caleano", "00 1 978-555 6789", "2022-08-12"],
  ["Chancellor", "Neighsay", "+1 857-555-3456", "2022-08-12"],
  [],
];

const cellType = (row, column) => {
  if (row === 0) return TitleCell;
  return column === 2 || column === 3 ? NumberCell : Cell;
};

const SheetGrid = () => (
  <GridView>
    <Grid>
      <colgroup>
        <col width="26" />
        {COLUMN_WIDTHS.map((w, i) => <col key={i} width={w} />)}
        <col />
      </colgroup>
      <thead>
        <tr>
          <Corner><Icon w={12} h={12}><path d="M12 0v12H0z" fill="#dcdcdc" stroke="none" /></Icon></Corner>
          {LETTERS.map((l) => <ColHead key={l} scope="col">{l}</ColHead>)}
          <ColHead as="td" />
        </tr>
      </thead>
      <tbody>
        {ROWS.map((row, r) => (
          <tr key={r}>
            <RowHead scope="row" $first={r === 0} $selected={r === 17}>{row.length ? r + 1 : ""}</RowHead>
            {Array.from({ length: 17 }, (_, c) => {
              const Type = cellType(r, c);
              return <Type key={c}>{row[c]}</Type>;
            })}
          </tr>
        ))}
      </tbody>
    </Grid>
    <Highlight />
  </GridView>
);

const VerticalBar = styled.div`
  display: flex;
  flex-direction: column;
  align-items: center;
  flex: none;
  width: 17px;
  margin-right: 2px;
  padding: 2px 0 0;
  border-radius: 8px;
  background: #f5f5f5;
`;
const ScrollThumb = styled.div`
  border-radius: 5px;
  background: #707070;
  ${(p) => (p.$vertical ? "width: 9px; height: 50px; margin: 2px 0 auto;" : "height: 9px; flex: 1;")}
`;
const Triangle = ({ d }) => (
  <Icon w={9} h={9} c="none"><path d={d} fill="#666" stroke="none" /></Icon>
);
const ScrollButton = styled(PlainButton)`
  width: ${(p) => p.$w || 13}px;
  height: 13px;
`;

/* ---------- sheet tabs and status bar ---------- */

const SheetBar = styled.div`
  display: flex;
  align-items: center;
  flex: none;
  height: 32px;
  padding-bottom: 1px;
`;
const NavButton = styled(PlainButton)`
  width: ${(p) => p.$w || 33}px;
  height: 30px;
`;
const SheetTab = styled(PlainButton)`
  align-self: flex-start;
  width: 58px;
  height: 28px;
  margin-left: 35px;
  border-radius: 0 0 5px 5px;
  background: #fff;
  box-shadow: 0 1px 2px #0003;
  font-weight: 600;
`;
const SheetTabText = styled.span`
  border-bottom: 2px solid ${GREEN};
  font-size: 13px;
  line-height: 20px;
`;
const HorizontalBar = styled.div`
  display: flex;
  align-items: center;
  flex: none;
  width: 37%;
  height: 17px;
  margin-right: 22px;
  border-radius: 8px;
  background: #f5f5f5;
`;
const Spacer = styled.span`
  flex: ${(p) => (p.$w ? `0 0 ${p.$w}px` : "1")};
`;
const StatusBar = styled.footer`
  display: flex;
  align-items: center;
  flex: none;
  height: 22px;
  background: #f3f3f3;
  border-top: 1px solid #fafafa;
  font-size: 11px;
  padding: 0 19px 0 11px;
`;
const AccessibilityButton = styled(PlainButton)`
  gap: 2px;
  margin-left: 20px;
`;
const ViewButton = styled(PlainButton)`
  width: 40px;
  height: 22px;
  background: ${(p) => (p.$active ? "#dedede" : "none")};
`;
const ZoomButton = styled(PlainButton)`
  width: 19px;
  height: 20px;
`;
const ZoomSlider = styled.input`
  appearance: none;
  width: 100px;
  height: 12px;
  margin: 0;
  background: linear-gradient(#666, #666) center / 100% 1px no-repeat;
  &::-webkit-slider-thumb {
    appearance: none;
    width: 5px;
    height: 12px;
    background: #555;
  }
`;
const ZoomValue = styled.span`
  width: 35px;
  text-align: right;
`;

export default function App() {
  return (
    <Window>
      <GlobalStyle />
      <TopBar />
      <Tabs />
      <RibbonBar />
      <Formula />
      <SheetArea>
        <SheetGrid />
        <VerticalBar>
          <ScrollButton aria-label="Scroll up"><Triangle d="M4.500 1 9 8H0z" /></ScrollButton>
          <ScrollThumb $vertical />
          <ScrollButton aria-label="Scroll down"><Triangle d="M0 1h9L4.500 8z" /></ScrollButton>
        </VerticalBar>
      </SheetArea>
      <SheetBar>
        <Spacer $w={15} />
        <NavButton aria-label="Previous sheet"><Icon w={7} h={11} c="#999" sw={1.2}><path d="M6 1 1 5.500 6 10" /></Icon></NavButton>
        <NavButton aria-label="Next sheet"><Icon w={7} h={11} c="#999" sw={1.2}><path d="M1 1l5 4.500L1 10" /></Icon></NavButton>
        <SheetTab><SheetTabText>Sheet1</SheetTabText></SheetTab>
        <Divider $w={8} />
        <NavButton $w={87} aria-label="New sheet"><Icon w={11} h={11}><path d="M5.500 0v11M0 5.500h11" /></Icon></NavButton>
        <Spacer />
        <BarGap $w={32}><Dots /></BarGap>
        <HorizontalBar>
          <ScrollButton $w={17} aria-label="Scroll left"><Triangle d="M8 0v9L1 4.500z" /></ScrollButton>
          <ScrollThumb />
          <Spacer $w={16} />
          <ScrollButton $w={17} aria-label="Scroll right"><Triangle d="M1 0v9l7-4.500z" /></ScrollButton>
        </HorizontalBar>
      </SheetBar>
      <StatusBar>
        Ready
        <AccessibilityButton>
          <Icon w={15} h={14}>
            <circle cx="6" cy="2" r="1.500" />
            <path d="M4.500 2.500 1.500 2c-1.500.5-1 2 0 2.200l2.500.8v3l-1.500 4c.5 1.500 1.500 1 2 0L6 9M7.500 2.500l3-.5c1.500.5 1 2 0 2.200L8 5v2.500M7 10.500l2.500 2.500 5-5.500" />
          </Icon>
          Accessibility: Good to go
        </AccessibilityButton>
        <Spacer />
        <ViewButton $active aria-label="Normal view"><Icon w={13} h={13} c="#222"><path d="M.5 .5h12v12H.5zM.5 4.500h12M.5 8.500h12M4.500 .5v12M8.500 .5v12" /></Icon></ViewButton>
        <ViewButton aria-label="Page layout view"><Icon w={13} h={13} c="#222"><path d="M.5 .5h12v12H.5zM3.500 2.500h6v8h-6zM5 4.500h3M5 6.500h3M5 8.500h3" /></Icon></ViewButton>
        <ViewButton aria-label="Page break view"><Icon w={13} h={13} c="#222"><path d="M.5 .5h12v12H.5zM.5 7.500h8v-7M4.500 .5v7" /></Icon></ViewButton>
        <ZoomButton aria-label="Zoom out"><Icon w={8} h={8}><path d="M0 4.500h8" /></Icon></ZoomButton>
        <ZoomSlider type="range" min="0" max="100" defaultValue="50" aria-label="Zoom" />
        <ZoomButton aria-label="Zoom in"><Icon w={8} h={8}><path d="M0 4.500h8M4.500 0v8" /></Icon></ZoomButton>
        <ZoomValue>100%</ZoomValue>
      </StatusBar>
    </Window>
  );
}
